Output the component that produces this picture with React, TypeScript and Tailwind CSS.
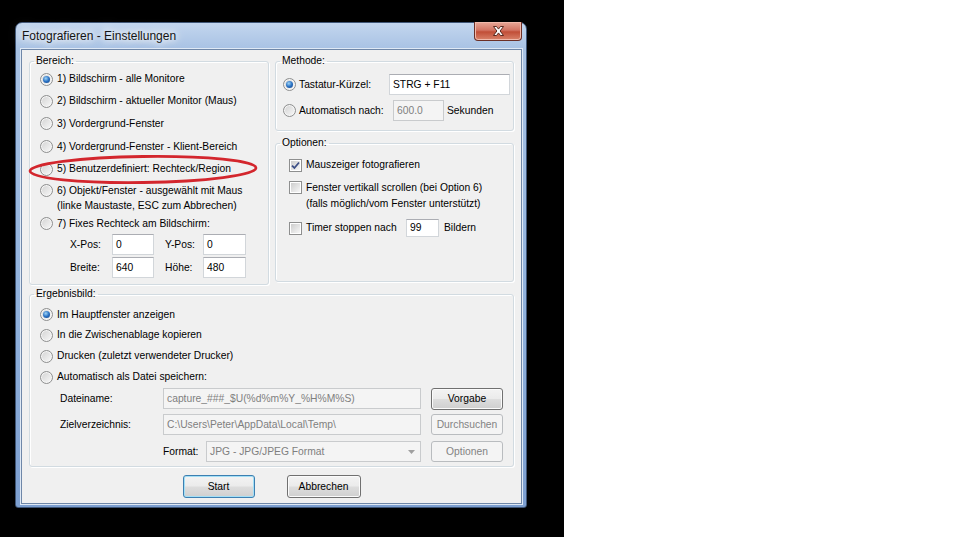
// App.tsx
// Windows-7-Dialog "Fotografieren - Einstellungen" auf schwarzem Hintergrund.

import type { ReactNode } from "react";

const sans = "font-['Liberation_Sans',Arial,sans-serif]";

function Radio({ checked = false }: { checked?: boolean }) {
  return (
    <span className="flex h-[13px] w-[13px] shrink-0 items-center justify-center rounded-full border border-[#8e8f8f] bg-[linear-gradient(135deg,#d2d2d2,#f9f9f9)] shadow-[inset_0_0_0_1px_#f6f6f6]">
      {checked && (
        <span className="h-[7px] w-[7px] rounded-full bg-[radial-gradient(circle_at_40%_35%,#9fd4f6,#2a72c4_50%,#153f80)]" />
      )}
    </span>
  );
}

function Check({ checked = false }: { checked?: boolean }) {
  return (
    <span className="flex h-[13px] w-[13px] shrink-0 border border-[#8e8f8f] bg-white p-px">
      <span className="flex h-full w-full items-center justify-center bg-[linear-gradient(135deg,#cdcdcd,#f7f7f7)]">
        {checked && (
          <svg width="9" height="9" viewBox="0 0 9 9">
            <path d="M1 4.6 L3.4 7 L8 1.5" fill="none" stroke="#3d4f86" strokeWidth="1.8" />
          </svg>
        )}
      </span>
    </span>
  );
}

function Input({ value, disabled = false, className }: { value: string; disabled?: boolean; className: string }) {
  const look = disabled
    ? "border-[#c9cbcd] bg-[#f4f4f4] text-[#7f7f7f]"
    : "border-[#d2d6da] border-t-[#abadb3] bg-white text-black";
  return <div className={`flex shrink-0 items-center overflow-hidden whitespace-nowrap border pl-[3px] ${look} ${className}`}>{value}</div>;
}

function Btn({ label, kind = "normal", className }: { label: string; kind?: "normal" | "default" | "disabled"; className: string }) {
  const look = {
    normal:
      "border-[#707070] bg-[linear-gradient(#f3f3f3,#ebebeb_48%,#dddddd_52%,#cfcfcf)] shadow-[inset_0_0_0_1px_#fbfbfb] text-black",
    default:
      "border-[#3c7fb1] bg-[linear-gradient(#f3f3f3,#ebebeb_48%,#dddddd_52%,#cfcfcf)] shadow-[inset_0_0_0_1px_#a3dff6] text-black",
    disabled: "border-[#b9bcbf] bg-[#f4f4f4] text-[#838383]",
  }[kind];
  return <div className={`flex shrink-0 items-center justify-center rounded-[3px] border ${look} ${className}`}>{label}</div>;
}

function Group({ title, className, children }: { title: string; className: string; children: ReactNode }) {
  return (
    <fieldset className={`rounded-[3px] border border-[#d2dbe1] shadow-[inset_1px_1px_0_#fff,1px_1px_0_#fff] ${className}`}>
      <legend className="ml-[4px] px-[2px] leading-[14px]">{title}</legend>
      {children}
    </fieldset>
  );
}

function RadioRow({ label, checked, className }: { label: string; checked?: boolean; className: string }) {
  return (
    <div className={`flex items-center gap-[4px] ${className}`}>
      <Radio checked={checked} />
      <span className="whitespace-nowrap">{label}</span>
    </div>
  );
}

function CloseButton() {
  return (
    <div className="-mt-px mr-[4px] ml-auto flex h-[19px] w-[48px] items-center justify-center rounded-b-[4px] border border-t-0 border-[#6b2f26] bg-[linear-gradient(#e8a898,#d27463_45%,#c14e37_55%,#d9826a)] shadow-[inset_0_0_0_1px_#f0b9ab]">
      <svg width="11" height="10" viewBox="0 0 11 10">
        <polygon
          points="0.5,0.5 3.5,0.5 5.5,3.1 7.5,0.5 10.5,0.5 7.1,5 10.5,9.5 7.5,9.5 5.5,6.9 3.5,9.5 0.5,9.5 3.9,5"
          fill="#fff"
          stroke="#4a1c12"
          strokeWidth="0.9"
          strokeLinejoin="round"
        />
      </svg>
    </div>
  );
}

function Bereich() {
  return (
    <Group title="Bereich:" className="h-[231px] w-[240px] shrink-0">
      <div className="flex flex-col pl-[10px]">
        <RadioRow label="1) Bildschirm - alle Monitore" checked className="h-[22px]" />
        <RadioRow label="2) Bildschirm - aktueller Monitor (Maus)" className="h-[22px]" />
        <RadioRow label="3) Vordergrund-Fenster" className="h-[23px]" />
        <RadioRow label="4) Vordergrund-Fenster - Klient-Bereich" className="h-[23px]" />
        <div className="relative">
          <RadioRow label="5) Benutzerdefiniert: Rechteck/Region" className="h-[22px]" />
          <svg className="absolute top-[-4px] left-[-12px]" width="232" height="32" viewBox="0 0 232 32">
            <ellipse cx="115" cy="15.5" rx="113" ry="13" fill="none" stroke="#d3262d" strokeWidth="2.8" transform="rotate(-0.8 115 15.5)" />
          </svg>
        </div>
        <div className="mt-[3px] flex items-start gap-[4px] leading-[15px]">
          <span className="mt-px">
            <Radio />
          </span>
          <span className="whitespace-nowrap">
            6) Objekt/Fenster - ausgewählt mit Maus
            <br />
            (linke Maustaste, ESC zum Abbrechen)
          </span>
        </div>
        <RadioRow label="7) Fixes Rechteck am Bildschirm:" className="h-[21px]" />
        <div className="flex h-[21px] items-center pl-[30px]">
          <span className="w-[42px]">X-Pos:</span>
          <Input value="0" className="h-[21px] w-[42px]" />
          <span className="ml-[11px] w-[38px]">Y-Pos:</span>
          <Input value="0" className="h-[21px] w-[43px]" />
        </div>
        <div className="mt-[2px] flex h-[21px] items-center pl-[30px]">
          <span className="w-[42px]">Breite:</span>
          <Input value="640" className="h-[21px] w-[42px]" />
          <span className="ml-[11px] w-[38px]">Höhe:</span>
          <Input value="480" className="h-[21px] w-[43px]" />
        </div>
      </div>
    </Group>
  );
}

function Methode() {
  return (
    <Group title="Methode:" className="h-[77px] w-[239px]">
      <div className="mt-[6px] flex flex-col gap-[5px] pl-[7px]">
        <div className="flex h-[21px] items-center">
          <Radio checked />
          <span className="ml-[3px] w-[90px]">Tastatur-Kürzel:</span>
          <Input value="STRG + F11" className="h-[21px] w-[121px]" />
        </div>
        <div className="flex h-[21px] items-center">
          <Radio />
          <span className="ml-[3px] w-[94px]">Automatisch nach:</span>
          <Input value="600.0" disabled className="h-[21px] w-[51px]" />
          <span className="ml-[3px]">Sekunden</span>
        </div>
      </div>
    </Group>
  );
}

function Optionen() {
  return (
    <Group title="Optionen:" className="h-[146px] w-[239px]">
      <div className="flex flex-col pl-[13px]">
        <div className="mt-[5px] flex h-[20px] items-center gap-[4px]">
          <Check checked />
          <span>Mauszeiger fotografieren</span>
        </div>
        <div className="mt-[5px] flex items-start gap-[4px] leading-[16px]">
          <span className="mt-[1px]">
            <Check />
          </span>
          <span className="whitespace-nowrap">
            Fenster vertikall scrollen (bei Option 6)
            <br />
            (falls möglich/vom Fenster unterstützt)
          </span>
        </div>
        <div className="mt-[7px] flex h-[18px] items-center">
          <Check />
          <span className="ml-[4px] w-[100px]">Timer stoppen nach</span>
          <Input value="99" className="h-[18px] w-[33px]" />
          <span className="ml-[5px]">Bildern</span>
        </div>
      </div>
    </Group>
  );
}

function Ergebnisbild() {
  return (
    <Group title="Ergebnisbild:" className="h-[180px] w-[485px]">
      <div className="flex flex-col pl-[10px]">
        <RadioRow label="Im Hauptfenster anzeigen" checked className="mt-[3px] h-[21px]" />
        <RadioRow label="In die Zwischenablage kopieren" className="h-[20px]" />
        <RadioRow label="Drucken (zuletzt verwendeter Drucker)" className="h-[22px]" />
        <RadioRow label="Automatisch als Datei speichern:" className="h-[20px]" />
        <div className="mt-[1px] flex h-[21px] items-center">
          <span className="ml-[20px] w-[103px]">Dateiname:</span>
          <Input value="capture_###_$U(%d%m%Y_%H%M%S)" disabled className="h-[21px] w-[258px]" />
          <Btn label="Vorgabe" className="ml-[10px] h-[22px] w-[72px]" />
        </div>
        <div className="mt-[5px] flex h-[21px] items-center">
          <span className="ml-[20px] w-[103px]">Zielverzeichnis:</span>
          <Input value="C:\Users\Peter\AppData\Local\Temp\" disabled className="h-[21px] w-[258px]" />
          <Btn label="Durchsuchen" kind="disabled" className="ml-[10px] h-[21px] w-[72px]" />
        </div>
        <div className="mt-[6px] flex h-[21px] items-center">
          <span className="ml-[123px] w-[43px]">Format:</span>
          <div className="flex h-[21px] w-[215px] items-center justify-between border border-[#c9cbcd] bg-[#f4f4f4] pr-[5px] pl-[3px] text-[#7f7f7f]">
            <span>JPG - JPG/JPEG Format</span>
            <svg width="7" height="4" viewBox="0 0 7 4">
              <path d="M0 0 H7 L3.5 4 Z" fill="#a0a0a0" />
            </svg>
          </div>
          <Btn label="Optionen" kind="disabled" className="ml-[10px] h-[21px] w-[72px]" />
        </div>
      </div>
    </Group>
  );
}

export default function App() {
  return (
    <div className={`flex h-[540px] w-[960px] bg-white text-[10.3px] leading-[14px] text-black ${sans}`}>
      <div className="h-[537px] w-[564px] shrink-0 bg-black pt-[22px] pl-[15px]">
        <div className="flex h-[486px] w-[512px] flex-col rounded-t-[7px] rounded-b-[3px] border border-[#3f5677] bg-[linear-gradient(180deg,#c3d6ee,#a8c2e4_26px,#90b1dc_60%,#7d9fd0)]">
          <div className="flex h-[26px] items-start">
            <div className="pt-[5px] pl-[6px] text-[12px] leading-[16px] text-[#141414] [text-shadow:0_0_6px_#fff,0_0_10px_#fff,0_0_14px_#eef4fb]">
              Fotografieren - Einstellungen
            </div>
            <CloseButton />
          </div>
          <div className="mr-[4px] mb-[3px] ml-[5px] flex h-[455px] flex-col border border-[#6f87a8] bg-[#f0f0f0] px-[7px] pt-[4px] pb-[5px] shadow-[0_0_0_1px_#dfe9f5]">
            <div className="flex items-start gap-[6px]">
              <Bereich />
              <div className="flex flex-col gap-[5px]">
                <Methode />
                <Optionen />
              </div>
            </div>
            <div className="mt-[2px]">
              <Ergebnisbild />
            </div>
            <div className="mt-[8px] flex justify-center gap-[32px]">
              <Btn label="Start" kind="default" className="h-[23px] w-[72px]" />
              <Btn label="Abbrechen" className="h-[23px] w-[74px]" />
            </div>
          </div>
        </div>
      </div>
    </div>
  );
}
